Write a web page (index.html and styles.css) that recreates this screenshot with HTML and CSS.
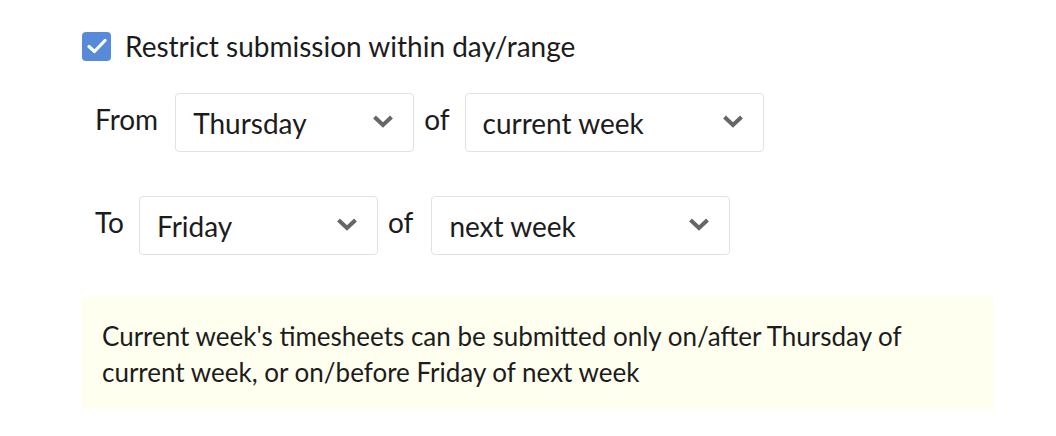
FILE: index.html
```html
<!DOCTYPE html>
<html lang="en">
<head>
    <meta charset="UTF-8">
    <title>Submission Restriction</title>
    <link rel="stylesheet" href="styles.css">
</head>
<body>
<div class="panel">
    <label class="check-row">
        <span class="checkbox">
            <svg width="20" height="16" viewBox="0 0 20 16"><path d="M2 8.5 L7.5 13.5 L18 2.5" fill="none" stroke="#fff" stroke-width="3.2" stroke-linecap="round" stroke-linejoin="round"/></svg>
        </span>
        Restrict submission within day/range
    </label>

    <div class="range-row">
        <span class="lbl lbl-from">From</span>
        <div class="select day">
            <span>Thursday</span>
            <svg class="chev" width="22" height="14" viewBox="0 0 22 14"><path d="M2.5 3 L11 11 L19.5 3" fill="none" stroke="#666" stroke-width="4"/></svg>
        </div>
        <span class="lbl lbl-of">of</span>
        <div class="select week">
            <span>current week</span>
            <svg class="chev" width="22" height="14" viewBox="0 0 22 14"><path d="M2.5 3 L11 11 L19.5 3" fill="none" stroke="#666" stroke-width="4"/></svg>
        </div>
    </div>

    <div class="range-row">
        <span class="lbl lbl-to">To</span>
        <div class="select day">
            <span>Friday</span>
            <svg class="chev" width="22" height="14" viewBox="0 0 22 14"><path d="M2.5 3 L11 11 L19.5 3" fill="none" stroke="#666" stroke-width="4"/></svg>
        </div>
        <span class="lbl lbl-of">of</span>
        <div class="select week">
            <span>next week</span>
            <svg class="chev" width="22" height="14" viewBox="0 0 22 14"><path d="M2.5 3 L11 11 L19.5 3" fill="none" stroke="#666" stroke-width="4"/></svg>
        </div>
    </div>

    <div class="note">
        Current week's timesheets can be submitted only on/after Thursday of<br>
        current week, or on/before Friday of next week
    </div>
</div>
</body>
</html>
```

FILE: styles.css
```css
body {
    margin: 0;
    background: #fff;
    font-family: Lato, "Open Sans", sans-serif;
    color: #1c1c1c;
}

.panel {
    padding: 31px 0 0 82px;
    width: 912px;
}

.check-row {
    display: flex;
    align-items: center;
    gap: 14px;
    font-size: 28px;
    height: 30px;
    line-height: 30px;
}

.checkbox {
    width: 29px;
    height: 29px;
    border-radius: 4px;
    background: #578ad8;
    display: flex;
    align-items: center;
    justify-content: center;
}

.range-row {
    display: flex;
    align-items: flex-start;
    margin-top: 32px;
    padding-left: 13px;
}

.range-row + .range-row {
    margin-top: 44px;
}

.lbl {
    font-size: 28px;
    line-height: 30px;
    padding-top: 11px;
}

.lbl-from { margin-right: 17px; }
.lbl-to { margin-right: 15px; }
.lbl-of { margin: 0 15px 0 10px; }
.range-row + .range-row .lbl-of { margin-right: 18px; }

.select {
    box-sizing: border-box;
    height: 59px;
    border: 1.5px solid #e2e2e2;
    border-radius: 4px;
    display: flex;
    align-items: center;
    justify-content: space-between;
    padding: 1px 19px 0 17px;
    font-size: 28px;
}

.select.day { width: 239px; }
.select.week { width: 299px; }

.chev {
    margin-top: -5px;
}

.note {
    margin-top: 42px;
    background: #fffff0;
    height: 112px;
    box-sizing: border-box;
    padding: 21px 20px 0 20px;
    font-size: 26px;
    line-height: 36px;
}
```
